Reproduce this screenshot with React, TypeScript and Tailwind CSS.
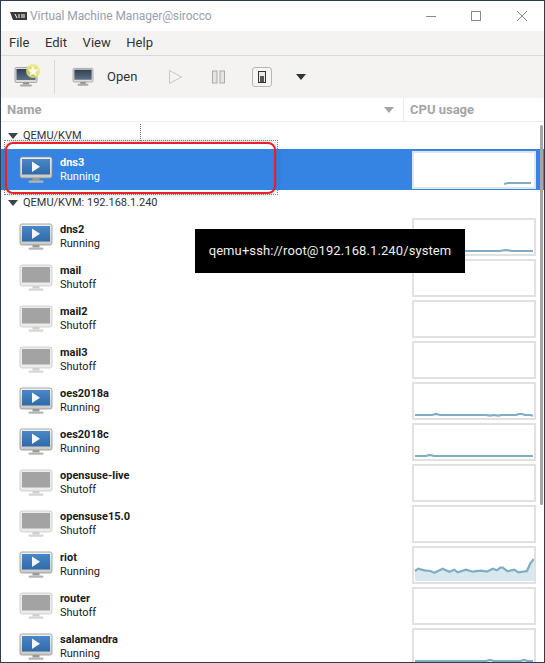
const font = { fontFamily: 'Roboto, "Noto Sans", sans-serif' };

function Monitor({ running }: { running: boolean }) {
  return (
    <svg width="34" height="30" viewBox="0 0 34 30" className="shrink-0">
      <defs>
        <linearGradient id="bz" x1="0" y1="0" x2="0" y2="1">
          <stop offset="0" stopColor="#f2f2f0" />
          <stop offset="1" stopColor="#c9c9c6" />
        </linearGradient>
        <linearGradient id="sc" x1="0" y1="0" x2="0" y2="1">
          <stop offset="0" stopColor="#4a87c8" />
          <stop offset="1" stopColor="#2f6aa8" />
        </linearGradient>
      </defs>
      <rect x="1" y="2" width="32" height="21" rx="2" fill={running ? "url(#bz)" : "#ececea"} stroke={running ? "#8f8f8c" : "#c8c8c6"} strokeWidth="0.8" />
      <rect x="3" y="4" width="28" height="15.5" fill={running ? "url(#sc)" : "#a3a3a3"} />
      {running && <path d="M13 6.5 L21 11.7 L13 17 Z" fill="#f5f8fb" />}
      <rect x="13.5" y="23" width="7" height="2.5" fill={running ? "#9a9a97" : "#cfcfcd"} />
      <rect x="9.5" y="25.5" width="15" height="2.2" rx="1" fill={running ? "#b5b5b2" : "#d6d6d4"} />
    </svg>
  );
}

function ToolMonitor({ w, h }: { w: number; h: number }) {
  return (
    <svg width={w} height={h} viewBox="0 0 24 22">
      <defs>
        <linearGradient id="ts" x1="0" y1="0" x2="0" y2="1">
          <stop offset="0" stopColor="#2f4052" />
          <stop offset="1" stopColor="#5d7084" />
        </linearGradient>
      </defs>
      <rect x="1" y="1.5" width="22" height="15" rx="1.5" fill="#dcdcda" stroke="#8d8d8b" strokeWidth="0.7" />
      <rect x="2.5" y="3" width="19" height="11" fill="url(#ts)" />
      <rect x="9" y="16.5" width="6" height="2" fill="#8f8f8d" />
      <rect x="6" y="18.5" width="12" height="2" rx="1" fill="#a9a9a7" />
    </svg>
  );
}

function Spark({ line, area, selected }: { line?: string; area?: boolean; selected?: boolean }) {
  return (
    <div className={`w-[124px] h-[38px] border-2 bg-white shrink-0 ${selected ? "border-[#dfe6ee]" : "border-[#e3e0e0]"}`}>
      <svg width="120" height="34" viewBox="0 0 120 34" className="block">
        {line && area && <path d={`${line} L120 33 L1 33 Z`} fill="#d8e8ef" />}
        {line && <path d={line} fill="none" stroke="#7fadc3" strokeWidth="2.2" />}
      </svg>
    </div>
  );
}

type Vm = { name: string; on: boolean; line?: string; area?: boolean };

const vms: Vm[] = [
  { name: "dns2", on: true, line: "M1 31 L85 31 L92 30 L99 31 L119 31" },
  { name: "mail", on: false },
  { name: "mail2", on: false },
  { name: "mail3", on: false },
  { name: "oes2018a", on: true, line: "M1 31 L18 31 L22 30 L26 31 L72 31 L76 31.7 L80 31 L84 31.7 L88 31 L102 31 L105 30 L108 30 L111 31 L116 31 L119 31.7" },
  { name: "oes2018c", on: true, line: "M1 31 L12 31 L16 30 L20 31 L119 31" },
  { name: "opensuse-live", on: false },
  { name: "opensuse15.0", on: false },
  {
    name: "riot",
    on: true,
    area: true,
    line: "M1 23 L4.3 20.7 L10.3 22.3 L16.3 23 L20.3 24.7 L28.7 20.7 L35.3 23.7 L40.3 21.7 L43.7 24.3 L52 21.7 L58.7 23.7 L67 22.7 L73 23.7 L78.7 20.7 L83 22.3 L86.3 19.7 L88.7 19.7 L93.7 23.3 L100.3 21.7 L104.3 24.3 L113 23 L116.3 15.3 L119.7 11.3",
  },
  { name: "router", on: false },
  { name: "salamandra", on: true, line: "M1 31 L72 31 L76 30 L80 31 L106 31 L110 30 L114 31 L119 31" },
];

function Row({ vm, selected }: { vm: Vm; selected?: boolean }) {
  return (
    <div className={`flex items-center h-[41px] pl-[18px] shrink-0 ${selected ? "bg-[#3584e4] text-white" : "text-[#1a1a1a]"}`}>
      <Monitor running={vm.on} />
      <div className="ml-[7px] flex flex-col justify-center w-[352px] text-[11px] leading-[14px]">
        <span className="font-bold">{vm.name}</span>
        <span>{vm.on ? "Running" : "Shutoff"}</span>
      </div>
      <Spark line={vm.line} area={vm.area} selected={selected} />
    </div>
  );
}

function Group({ label, short }: { label: string; short?: boolean }) {
  return (
    <div className={`flex items-center pl-[7px] text-[11px] text-[#2e3436] shrink-0 ${short ? "h-[26px]" : "h-[27px] pt-[1px]"}`}>
      <svg width="10" height="6" viewBox="0 0 10 6">
        <path d="M0 0 H10 L5 6 Z" fill="#3f4547" />
      </svg>
      <span className="ml-[5px]">{label}</span>
    </div>
  );
}

export default function App() {
  return (
    <div className="w-[545px] h-[663px] bg-[#2c3e50] pt-px pl-px pr-px overflow-hidden" style={font}>
      <div className="relative w-[543px] h-[661px] bg-white overflow-hidden flex flex-col">
        <div className="h-[30px] flex items-center shrink-0 bg-white">
          <svg width="17" height="10" viewBox="0 0 17 10" className="ml-[9px]">
            <path d="M0 1 H17 V9 H3 Z" fill="#3a3a3a" />
            <path d="M5 3 L7 7 M9 3 V7 M12 3 V7 M14 3 V7" stroke="#fff" strokeWidth="1" />
          </svg>
          <span className="ml-[3px] text-[12px] tracking-[-0.08px] text-[#98a0ad]">Virtual Machine Manager@sirocco</span>
          <div className="ml-auto flex items-center">
            <svg width="12" height="12" viewBox="0 0 12 12" className="mr-[33px]">
              <path d="M1 6.5 H11" stroke="#8a8a8a" strokeWidth="1" />
            </svg>
            <svg width="12" height="12" viewBox="0 0 12 12" className="mr-[34px]">
              <rect x="1.5" y="1.5" width="9" height="9" fill="none" stroke="#8a8a8a" strokeWidth="1" />
            </svg>
            <svg width="12" height="12" viewBox="0 0 12 12" className="mr-[16px]">
              <path d="M1 1 L11 11 M11 1 L1 11" stroke="#8a8a8a" strokeWidth="1" />
            </svg>
          </div>
        </div>

        <div className="h-[25px] flex items-center bg-[#f4f3f1] border-b border-[#dcdad7] text-[13px] text-[#2e3436] shrink-0 pl-[8px] gap-[15.6px]">
          <span>File</span>
          <span>Edit</span>
          <span>View</span>
          <span>Help</span>
        </div>

        <div className="h-[42px] flex items-center bg-[#f4f3f1] shrink-0">
          <div className="relative ml-[13px] w-[24px] h-[22px]">
            <ToolMonitor w={24} h={22} />
            <svg width="16" height="16" viewBox="0 0 16 16" className="absolute -top-[3px] left-[11px]">
              <circle cx="8" cy="8" r="7" fill="#e8e86a" opacity="0.8" />
              <path d="M8 2.5 L9.6 6.2 L13.5 6.6 L10.6 9.2 L11.4 13 L8 11 L4.6 13 L5.4 9.2 L2.5 6.6 L6.4 6.2 Z" fill="#fbfbe8" />
            </svg>
          </div>
          <div className="ml-[16px] w-px h-[34px] bg-[#dcdad7]" />
          <div className="ml-[17px] flex">
            <ToolMonitor w={22} h={20} />
          </div>
          <span className="ml-[13px] w-[29px] text-[13px] text-[#2e3436]">Open</span>
          <svg width="15" height="16" viewBox="0 0 15 16" className="ml-[32px]">
            <path d="M1.5 1.5 L13.5 8 L1.5 14.5 Z" fill="#f4f3f1" stroke="#c7c7c5" strokeWidth="1" />
          </svg>
          <svg width="14" height="14" viewBox="0 0 14 14" className="ml-[29px]">
            <rect x="0.5" y="1" width="4.5" height="12" fill="#e4e4e2" stroke="#a9a9a7" strokeWidth="1" />
            <rect x="8" y="1" width="4.5" height="12" fill="#e4e4e2" stroke="#a9a9a7" strokeWidth="1" />
          </svg>
          <div className="ml-[26px] w-[20px] h-[20px] rounded-[3px] border border-[#b9b7b4] bg-[#f7f6f5] flex items-center justify-center">
            <svg width="8" height="12" viewBox="0 0 8 12">
              <rect x="0.5" y="0.5" width="7" height="11" fill="#e9e9e8" stroke="#333" strokeWidth="1" />
              <rect x="2" y="5" width="4" height="6" fill="#555" />
            </svg>
          </div>
          <svg width="10" height="6" viewBox="0 0 10 6" className="ml-[24px]">
            <path d="M0 0 H10 L5 6 Z" fill="#2e3436" />
          </svg>
        </div>

        <div className="h-[24px] flex bg-white border-b border-[#eeedec] shrink-0 text-[13px] font-bold text-[#a3a5a6]">
          <div className="w-[403px] flex items-center justify-between pl-[6px] pr-[9px] border-r border-[#eeedec]">
            <span>Name</span>
            <svg width="10" height="6" viewBox="0 0 10 6">
              <path d="M0 0 H10 L5 6 Z" fill="#a3a5a6" />
            </svg>
          </div>
          <div className="flex items-center pl-[6px]">CPU usage</div>
        </div>

        <div className="flex flex-col">
          <Group label="QEMU/KVM" />
          <Row vm={{ name: "dns3", on: true, line: "M90 31 L94 30 L117 30" }} selected />
          <Group label="QEMU/KVM: 192.168.1.240" short />
          {vms.map((vm) => (
            <Row key={vm.name} vm={vm} />
          ))}
        </div>

        <div className="absolute left-[539px] top-[124px] w-[3px] h-[380px] bg-[#a6a6a6] rounded-sm" />
        <div className="absolute left-[139px] top-[123px] h-[17px] border-l border-dotted border-[#777]" />
        <div className="absolute left-[3px] top-[139px] w-[274px] h-[55px] border border-dotted border-[#888]" />
        <div className="absolute left-[4px] top-[141px] w-[271px] h-[52px] border-2 border-[#e8202a] rounded-[8px] shadow-[0_0_6px_rgba(0,0,0,0.25)]" />
        <div className="absolute left-[194px] top-[228px] w-[270px] h-[44px] bg-black text-[#eeeeee] text-[13px] flex items-center justify-center tracking-[0.1px]">
          qemu+ssh://root@192.168.1.240/system
        </div>
      </div>
    </div>
  );
}
